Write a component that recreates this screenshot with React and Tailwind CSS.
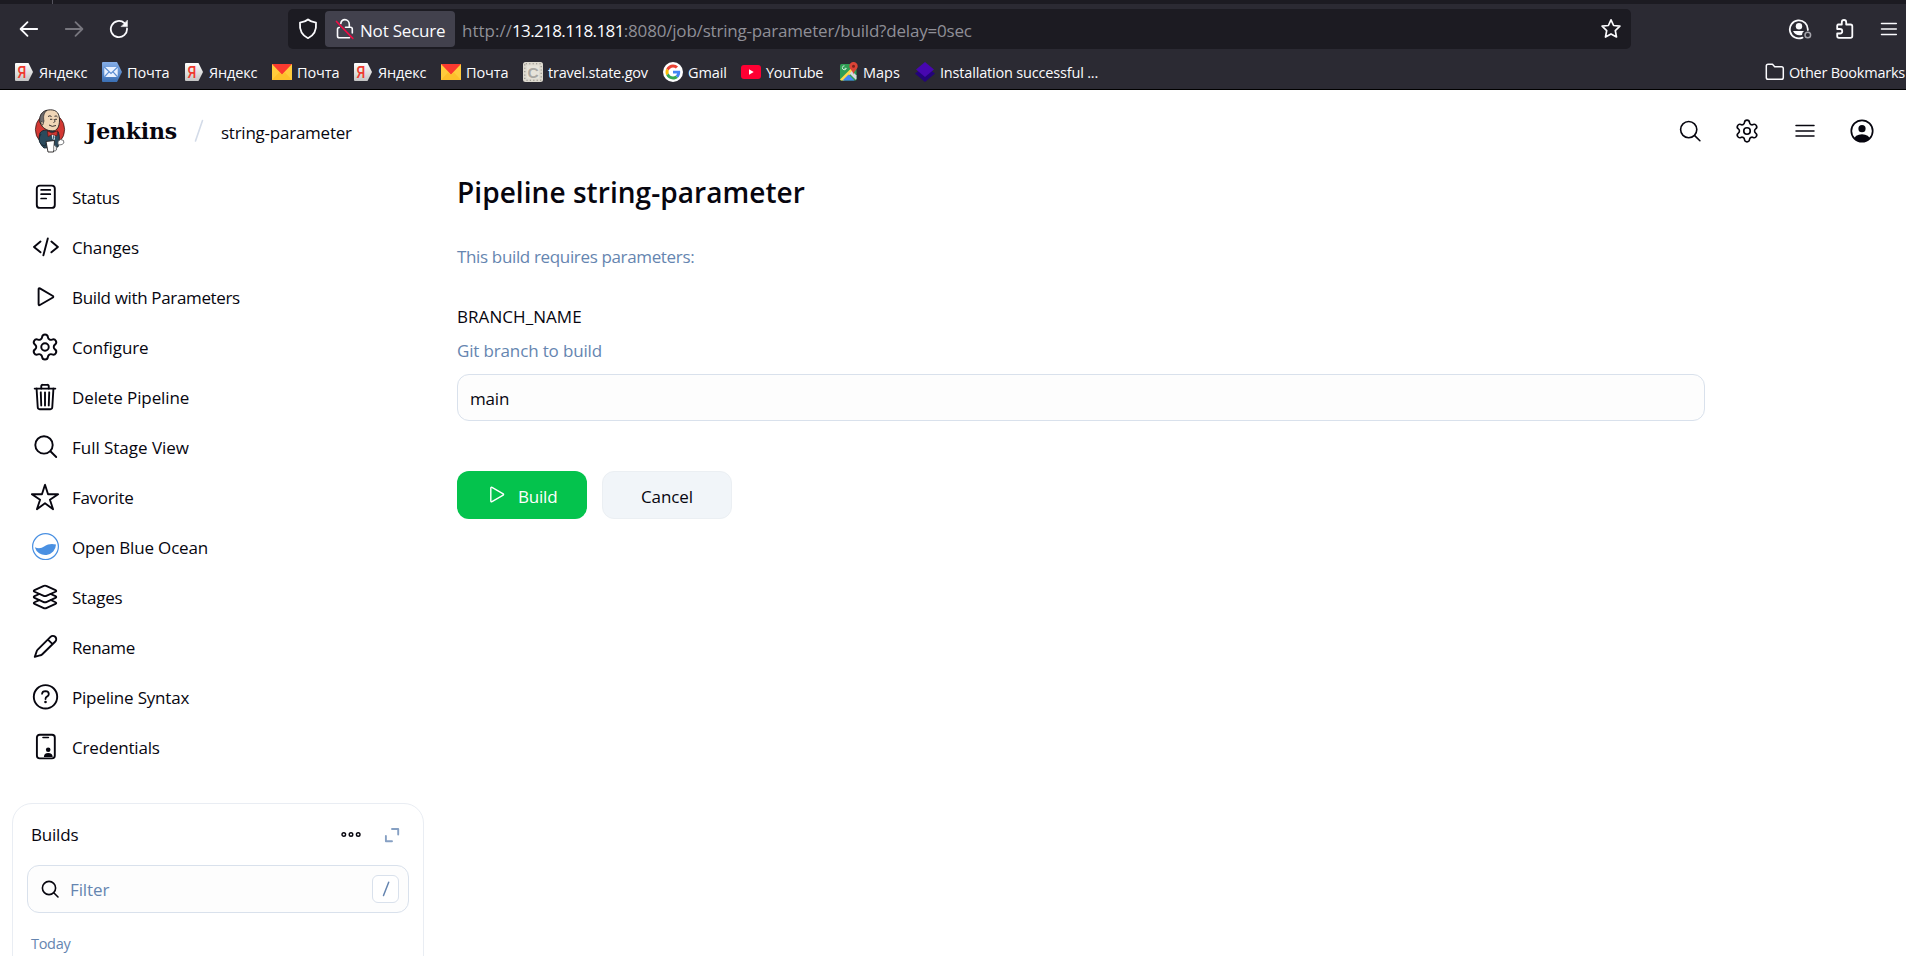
import React from "react";
import { IoTrashOutline, IoLayersOutline, IoStarOutline } from "react-icons/io5";
import { Settings } from "lucide-react";

/* ---------- browser icons ---------- */

function Line({ w, h, sw = 1.8, className = "", children }) {
  return (
    <svg
      width={w}
      height={h}
      viewBox={`0 0 ${w} ${h}`}
      fill="none"
      stroke="currentColor"
      strokeWidth={sw}
      strokeLinecap="round"
      strokeLinejoin="round"
      className={`block shrink-0 ${className}`}
    >
      {children}
    </svg>
  );
}

function Yandex() {
  return (
    <svg width="18" height="18" viewBox="0 0 18 18" className="block">
      <defs>
        <linearGradient id="ya" x1="0" y1="0" x2="0" y2="1">
          <stop offset="0" stopColor="#ffffff" />
          <stop offset="1" stopColor="#c4c4c4" />
        </linearGradient>
      </defs>
      <path d="M0 1Q0 0 1 0H13.500L18 9L13.500 18H1Q0 18 0 17Z" fill="url(#ya)" />
      <text x="2.600" y="15" fontFamily="Liberation Sans" fontWeight="bold" fontSize="16" textLength="8.500" lengthAdjust="spacingAndGlyphs" fill="#ee3a30">Я</text>
    </svg>
  );
}

function BlueMail() {
  return (
    <svg width="20" height="20" viewBox="0 0 20 20" className="block">
      <defs>
        <linearGradient id="bm" x1="0" y1="0" x2="0" y2="1">
          <stop offset="0" stopColor="#86aee8" />
          <stop offset="1" stopColor="#3a6fb4" />
        </linearGradient>
      </defs>
      <path d="M0 1Q0 0 1 0H15L20 10L15 20H1Q0 20 0 19Z" fill="url(#bm)" />
      <rect x="2.300" y="5" width="13.400" height="10" fill="#e9f1ff" />
      <path d="M2.300 5L9 11.500L15.700 5M2.300 15L7 9.800M15.700 15L11 9.800" stroke="#5d8fd3" strokeWidth="1.200" fill="none" />
    </svg>
  );
}

function Envelope() {
  return (
    <svg width="20" height="16" viewBox="0 0 20 16" className="block">
      <rect width="20" height="16" fill="#ffcc3c" />
      <path d="M0 16L7 8.500L10 11L13 8.500L20 16Z" fill="#fdc02b" />
      <path d="M0 0H20L10 10.500Z" fill="#fb3a2f" />
    </svg>
  );
}

function StateGov() {
  return (
    <svg width="20" height="20" viewBox="0 0 20 20" className="block">
      <rect width="20" height="20" rx="2.500" fill="#dedad0" />
      <rect x="1.800" y="1.800" width="16.400" height="16.400" rx="1" fill="none" stroke="#8f8c84" strokeWidth="1.100" strokeDasharray="1.200 2.200" />
      <rect x="4" y="3.500" width="12" height="13" fill="#e6e3da" />
      <text x="4.600" y="15.500" fontFamily="Liberation Sans" fontWeight="bold" fontSize="15.500" fill="#a9a7a2">C</text>
    </svg>
  );
}

function Google() {
  return (
    <svg width="20" height="20" viewBox="0 0 20 20" className="block">
      <circle cx="10" cy="10" r="10" fill="#fff" />
      <g transform="translate(2.500 2.500) scale(.3125)">
        <path fill="#EA4335" d="M24 9.500c3.540 0 6.710 1.220 9.210 3.600l6.850-6.850C35.900 2.380 30.470 0 24 0 14.620 0 6.510 5.380 2.560 13.220l7.980 6.190C12.430 13.720 17.740 9.500 24 9.500z" />
        <path fill="#4285F4" d="M46.980 24.550c0-1.570-.15-3.090-.38-4.550H24v9.020h12.940c-.58 2.960-2.260 5.480-4.780 7.180l7.730 6c4.510-4.180 7.090-10.360 7.090-17.650z" />
        <path fill="#FBBC05" d="M10.530 28.590c-.48-1.450-.76-2.990-.76-4.590s.27-3.140.76-4.590l-7.980-6.190C.92 16.460 0 20.120 0 24c0 3.880.92 7.540 2.560 10.780l7.970-6.190z" />
        <path fill="#34A853" d="M24 48c6.480 0 11.930-2.130 15.890-5.810l-7.730-6c-2.150 1.450-4.920 2.300-8.160 2.300-6.260 0-11.570-4.220-13.470-9.910l-7.980 6.190C6.510 42.620 14.620 48 24 48z" />
      </g>
    </svg>
  );
}

function YouTube() {
  return (
    <svg width="20" height="14" viewBox="0 0 20 14" className="block">
      <rect width="20" height="14" rx="3" fill="#ff0033" />
      <path d="M8 4.300L12.700 7L8 9.700Z" fill="#fff" />
    </svg>
  );
}

function Maps() {
  return (
    <svg width="20" height="20" viewBox="0 0 20 20" className="block">
      <rect x="1" y="2" width="16.500" height="16.500" rx="1.500" fill="#2f9e54" />
      <path d="M1 17.500L12 6.500L14.500 9L5 18.500H2Z" fill="#ffd84a" />
      <path d="M3.500 18.500L9.500 12.500L15.500 18.500Z" fill="#4285f4" />
      <path d="M10.500 11.500L13 9L17.500 13.500V17L16.800 17.800Z" fill="#d8dade" />
      <path d="M5.500 3.800a2 2 0 1 0 1.800 2.500H5.600" fill="none" stroke="#cfead8" strokeWidth="1" />
      <path d="M14.500 0a4.200 4.200 0 0 0-4.200 4.200c0 3 3.400 4 4.200 8.300c.8-4.300 4.200-5.300 4.200-8.300A4.200 4.200 0 0 0 14.500 0Z" fill="#db4437" />
      <circle cx="14.500" cy="4.200" r="1.500" fill="#7b231c" />
    </svg>
  );
}

function Diamond() {
  return (
    <svg width="20" height="20" viewBox="0 0 20 20" className="block">
      <path d="M0 11.500L10 4L20 11.500L10 20Z" fill="#23037a" />
      <path d="M1 7.500L10 0L19 7.500L10 15Z" fill="#4707b0" />
    </svg>
  );
}

const bookmarks = [
  { icon: <Yandex />, text: "Яндекс", box: "w-[87px] gap-[4px] tracking-[-0.150px]" },
  { icon: <BlueMail />, text: "Почта", box: "w-[83px] gap-[5px] tracking-[-0.100px]" },
  { icon: <Yandex />, text: "Яндекс", box: "w-[87px] gap-[4px] tracking-[-0.150px]" },
  { icon: <Envelope />, text: "Почта", box: "w-[82px] gap-[5px] tracking-[-0.100px]" },
  { icon: <Yandex />, text: "Яндекс", box: "w-[87px] gap-[4px] tracking-[-0.150px]" },
  { icon: <Envelope />, text: "Почта", box: "w-[82px] gap-[5px] tracking-[-0.100px]" },
  { icon: <StateGov />, text: "travel.state.gov", box: "w-[140px] gap-[5px] tracking-[-0.200px]" },
  { icon: <Google />, text: "Gmail", box: "w-[78px] gap-[5px] tracking-[-0.100px]" },
  { icon: <YouTube />, text: "YouTube", box: "w-[98px] gap-[5px] tracking-[-0.350px]" },
  { icon: <Maps />, text: "Maps", box: "w-[76px] gap-[4px]" },
  { icon: <Diamond />, text: "Installation successful ...", box: "w-[200px] gap-[5px] tracking-[-0.180px]" },
];

function Browser() {
  return (
    <div className="h-[90px] border-b border-black bg-[#2b2a33] text-[#fbfbfe]">
      <div className="h-1 bg-[#1c1b22] pl-[52px]">
        <div className="h-1 w-px bg-[#55545e]" />
      </div>
      <div className="flex h-[50px] items-center">
        <Line w={20} h={18} className="ml-[19px]">
          <path d="M18.200 9H2M8.500 2.200L1.600 9L8.500 15.800" />
        </Line>
        <Line w={20} h={18} className="ml-[25px] text-[#77767e]">
          <path d="M1.800 9H18M11.500 2.200L18.400 9L11.500 15.800" />
        </Line>
        <Line w={20} h={20} className="ml-[25px]">
          <path d="M18 9.500A8.100 8.100 0 1 1 15.500 4.200" />
          <path d="M18.400 1.500V7.600H12.400Z" fill="currentColor" strokeWidth="0.600" />
        </Line>
        <div className="ml-[159px] flex h-10 w-[1343px] items-center rounded-[5px] bg-[#1c1b22]">
          <Line w={20} h={22} className="ml-[10px]">
            <path d="M10 1.500C12 3.300 15 4.200 18 4.700C18.600 11.500 16 17.500 10 20.200C4 17.500 1.400 11.500 2 4.700C5 4.200 8 3.300 10 1.500Z" />
          </Line>
          <div className="ml-[7px] flex h-9 w-[130px] items-center rounded-[4px] bg-[#42414d]">
            <Line w={20} h={22} className="ml-[10px]" sw={1.6}>
              <path d="M5.800 5.500C6.200 3 7.600 1.600 9.900 1.600S14.300 3.600 14.300 6.500V9.300" />
              <path d="M10.500 9.300H15.500A1.800 1.800 0 0 1 17.300 11.100V15M14.500 19.800H4.300A1.800 1.800 0 0 1 2.500 18V11.300A1.800 1.800 0 0 1 4.300 9.500" />
              <path d="M1.500 3.500L17.800 20.300" stroke="#f10c45" strokeWidth="1.700" />
            </Line>
            <span className="ml-[5px] pt-[2px] text-[17px] leading-none tracking-[-0.200px] whitespace-nowrap">Not Secure</span>
          </div>
          <div className="ml-[7px] flex pt-[2px] text-[17px] leading-none whitespace-nowrap text-[#8f8f97]">
            <span>http://</span>
            <span className="tracking-[-0.600px] text-[#fbfbfe]">13.218.118.181</span>
            <span className="tracking-[-0.190px]">:8080/job/string-parameter/build?delay=0sec</span>
          </div>
          <Line w={22} h={22} sw={1.7} className="mr-[9px] ml-auto">
            <path d="M11 1.800L13.600 7.500L19.900 8.200L15.300 12.600L16.500 19L11 15.900L5.500 19L6.700 12.600L2.100 8.200L8.400 7.500Z" />
          </Line>
        </div>
        <Line w={24} h={22} className="ml-[157px]">
          <path d="M14.500 19.600A9 9 0 1 1 19.800 12" />
          <circle cx="11" cy="8.200" r="3.200" fill="currentColor" stroke="none" />
          <path d="M5 13H16A5 5 0 0 0 14 17A8 8 0 0 1 5 13Z" fill="currentColor" stroke="none" />
          <circle cx="19.800" cy="17" r="2.800" stroke="#a5a4ab" strokeWidth="1.500" />
        </Line>
        <Line w={20} h={22} className="ml-[23px]">
          <path d="M3 6.500H6.800V4.200A2.200 2.200 0 0 1 11.200 4.200V6.500H15.500A1.800 1.800 0 0 1 17.300 8.300V18A1.800 1.800 0 0 1 15.500 19.800H4A1.800 1.800 0 0 1 2.200 18V15.500H5A2.200 2.200 0 0 0 5 11H2.200V8Q2.200 6.500 3.500 6.500" />
        </Line>
        <Line w={18} h={16} sw={1.5} className="ml-[25px]">
          <path d="M1.500 2.500H16.300M1.500 8H16.300M1.500 13.500H16.300" />
        </Line>
      </div>
      <div className="flex h-[35px] items-center pl-[15px] text-[14.500px] leading-none">
        {bookmarks.map((b, i) => (
          <div key={i} className={`flex shrink-0 items-center whitespace-nowrap ${b.box}`}>
            <span className="w-5 shrink-0">{b.icon}</span>
            <span className="pt-[3px]">{b.text}</span>
          </div>
        ))}
        <div className="mr-[1px] ml-auto flex items-center gap-1 whitespace-nowrap">
          <Line w={20} h={18} sw={1.5}>
            <path d="M1.300 14.500V3A1.800 1.800 0 0 1 3.100 1.200H7.500L9.700 3.700H16.500A1.800 1.800 0 0 1 18.300 5.500V14.500A1.800 1.800 0 0 1 16.500 16.300H3.100A1.800 1.800 0 0 1 1.300 14.500Z" />
          </Line>
          <span className="pt-[3px] tracking-[-0.230px]">Other Bookmarks</span>
        </div>
      </div>
    </div>
  );
}

/* ---------- Jenkins header ---------- */

function Butler() {
  return (
    <svg width="32" height="44" viewBox="0 0 32 44" className="block shrink-0">
      <ellipse cx="16" cy="20.500" rx="14.600" ry="16" fill="#d33833" stroke="#3b1a18" strokeWidth="0.800" />
      <path d="M6 13C4.500 5 10 .8 16.500 .8S25.500 5 25.500 11C25.500 17 23.500 22 18.500 22S7.500 19 6 13Z" fill="#f0d6b7" stroke="#231f20" strokeWidth="0.900" />
      <path d="M6 13.500C4.800 6.500 8.500 2 13 1.300C9.800 4 9 7.500 10 12L8.800 16Z" fill="#6d6b6d" stroke="#231f20" strokeWidth="0.600" />
      <path d="M8.200 12.500C6.500 12 6.300 15.500 9 16" fill="#f0d6b7" stroke="#231f20" strokeWidth="0.700" />
      <path d="M14 7.500Q16 6 17.500 7.500M20.500 7.300Q22.500 6.200 23.500 8M16 10.300H18.300M21 10.300H23M20 10Q22 13 19.500 13.500M15 16Q18 18.500 22 16.500" stroke="#231f20" strokeWidth="0.900" fill="none" />
      <path d="M6 24C8 21 12 20.500 14.500 22L24 22.500C26 27 25.500 32 24 38L10 39C5 35 4.500 28 6 24Z" fill="#2b4a5c" stroke="#16252e" strokeWidth="0.900" />
      <path d="M17.500 25L21.500 25L20.500 31L18.500 30Z" fill="#fff" />
      <path d="M18.800 25.500L20.800 28L19 31Z" fill="#42647a" />
      <path d="M13.500 22L18 24L23.500 21.800L23 27L18.500 25.500L14 27.500Z" fill="#d33833" stroke="#5b1512" strokeWidth="0.700" />
      <path d="M7 25C3.500 30 5 36 11 37L13 33" fill="#2b4a5c" stroke="#16252e" strokeWidth="0.800" />
      <path d="M12 32.500L20.500 31.500L19.500 43H14Z" fill="#fff" stroke="#231f20" strokeWidth="0.900" />
      <path d="M24 32.500Q26.500 29 29.500 31.500Q31 34.500 28 35.500Q24.500 37 24 34.500Z" fill="#fff" stroke="#55585a" strokeWidth="0.800" />
      <path d="M20 36Q24 38 22.500 41Q21 43 19.500 41.500" fill="#e4e4e4" stroke="#55585a" strokeWidth="0.800" />
    </svg>
  );
}

function Header() {
  return (
    <header className="flex h-[82px] items-center pl-[34px]">
      <Butler />
      <span className="ml-[20px] font-['DejaVu_Serif','Liberation_Serif',serif] text-[22px] leading-none font-bold tracking-[-0.200px]">
        Jenkins
      </span>
      <Line w={10} h={24} sw={1.6} className="ml-[17px] text-[#d3dbe8]">
        <path d="M8.500 1.500L1.500 22" />
      </Line>
      <span className="ml-[17px] pt-[2px] text-[17px] leading-none tracking-[-0.240px]">string-parameter</span>
      <Line w={24} h={24} sw={1.6} className="ml-auto">
        <circle cx="10.700" cy="10.600" r="8.100" />
        <path d="M16.700 16.600L21.900 21.700" />
      </Line>
      <Settings size={26} strokeWidth={1.5} className="ml-[32px] shrink-0" />
      <Line w={22} h={20} sw={1.5} className="ml-[34px]">
        <path d="M2 4.600H20M2 9.900H20M2 15H20" />
      </Line>
      <svg width="24" height="24" viewBox="0 0 24 24" className="mr-[32px] ml-[34px] block shrink-0">
        <defs>
          <clipPath id="usr"><circle cx="12" cy="12" r="10.800" /></clipPath>
        </defs>
        <circle cx="12" cy="12" r="10.700" fill="none" stroke="currentColor" strokeWidth="1.700" />
        <circle cx="12" cy="9.700" r="3.600" fill="currentColor" />
        <ellipse cx="12" cy="20.500" rx="8" ry="5.200" fill="currentColor" clipPath="url(#usr)" />
      </svg>
    </header>
  );
}

/* ---------- side panel ---------- */

const Glyph = ({ children }) => <Line w={30} h={30} sw={1.9}>{children}</Line>;

const tasks = [
  {
    label: "Status", track: "tracking-[-0.300px]",
    icon: <Glyph><rect x="6.800" y="3.600" width="18" height="22.300" rx="3" /><path d="M11.100 7.900H20.300M11.100 12.200H20.300M11.100 16.500H16.200" strokeWidth="1.700" /></Glyph>,
  },
  {
    label: "Changes", track: "tracking-[-0.150px]",
    icon: <Glyph><path d="M10.500 9.500L4 14.900L10.500 20.300M21.400 9.500L27.900 14.900L21.400 20.300M17.800 6.500L13.400 23.300" /></Glyph>,
  },
  {
    label: "Build with Parameters", track: "tracking-[-0.350px]",
    icon: <Glyph><path d="M8.600 7.100V22.300Q8.700 23.600 9.900 23L22.900 15.500Q23.700 14.700 22.900 14L9.900 6.400Q8.700 5.900 8.600 7.100Z" /></Glyph>,
  },
  {
    label: "Configure", track: "tracking-[-0.120px]",
    icon: <Settings size={30} strokeWidth={1.55} className="block shrink-0" />,
  },
  { label: "Delete Pipeline", track: "tracking-[-0.100px]", icon: <IoTrashOutline size={30} className="block shrink-0" /> },
  {
    label: "Full Stage View", track: "tracking-[-0.030px]",
    icon: <Glyph><circle cx="14" cy="12.900" r="8.700" /><path d="M20.400 19.300L26.200 25" /></Glyph>,
  },
  { label: "Favorite", track: "tracking-[-0.300px]", icon: <IoStarOutline size={30} className="block shrink-0" /> },
  {
    label: "Open Blue Ocean", track: "tracking-[-0.160px]",
    icon: (
      <svg width="30" height="30" viewBox="0 0 30 30" className="block shrink-0">
        <circle cx="15.500" cy="14.600" r="12.900" fill="#fff" stroke="#4a90e2" strokeWidth="1.200" />
        <path d="M4.800 15.200C8.500 16.800 11.500 16.300 14.500 14.200C18 12 22 11.300 26 12.600A10.800 10.800 0 0 1 4.800 15.200Z" fill="#4a90e2" />
      </svg>
    ),
  },
  { label: "Stages", track: "tracking-[-0.200px]", icon: <IoLayersOutline size={30} className="block shrink-0" /> },
  {
    label: "Rename", track: "tracking-[-0.400px]",
    icon: <Glyph><path d="M4.800 24.900L6.700 19.300Q7 18.400 7.700 17.700L20.500 4.900A3.200 3.200 0 0 1 25.300 9.500L12.300 22.300Q11.600 23 10.700 23.200ZM17.900 7.600L22.600 12.100" /></Glyph>,
  },
  {
    label: "Pipeline Syntax", track: "tracking-[-0.200px]",
    icon: (
      <Glyph>
        <circle cx="15.500" cy="14.800" r="11.700" />
        <path d="M12.100 11.800Q12.300 9.200 15.500 9.200Q18.800 9.300 18.800 12Q18.800 13.600 17 14.600Q15.500 15.500 15.500 17" strokeWidth="1.800" />
        <circle cx="15.500" cy="20" r="1.300" fill="currentColor" stroke="none" />
      </Glyph>
    ),
  },
  {
    label: "Credentials", track: "tracking-[-0.180px]",
    icon: (
      <Glyph>
        <rect x="6.900" y="2.700" width="17.900" height="23.700" rx="2.800" />
        <path d="M13 5.500H18.400" strokeWidth="1.600" />
        <circle cx="18.200" cy="17.700" r="2.300" fill="currentColor" stroke="none" />
        <path d="M13.900 25Q13.900 21 18.200 21T22.700 25Z" fill="currentColor" stroke="none" />
      </Glyph>
    ),
  },
];

function Sidebar() {
  return (
    <aside className="w-[424px] shrink-0 pl-3">
      <nav>
        {tasks.map((t) => (
          <div key={t.label} className="flex h-[50px] items-center gap-[12px] pl-[18px]">
            {t.icon}
            <span className={`text-[17px] leading-none whitespace-nowrap ${t.track}`}>{t.label}</span>
          </div>
        ))}
      </nav>
      <section className="mt-[31px] h-[200px] rounded-[20px] border border-[#e9edf3] px-[14px]">
        <div className="flex h-[61px] items-center pl-[4px]">
          <span className="text-[17px] leading-none tracking-[-0.200px]">Builds</span>
          <Line w={20} h={8} sw={1.4} className="ml-auto">
            <circle cx="2.800" cy="3.500" r="1.800" />
            <circle cx="10" cy="3.500" r="1.800" />
            <circle cx="17.200" cy="3.500" r="1.800" />
          </Line>
          <Line w={16} h={16} sw={1.9} className="mr-[9px] ml-[23px] text-[#86a0c3]">
            <path d="M8 2H14.200V7.500M1.900 9V14.200H8" />
          </Line>
        </div>
        <div className="flex h-12 items-center rounded-[12px] border border-[#d9e1ec] bg-[#fdfdfd] pr-[9px] pl-[13px]">
          <Line w={19} h={19} sw={1.6}>
            <circle cx="8" cy="8" r="6.600" />
            <path d="M13 13L17 17" />
          </Line>
          <span className="ml-[10px] text-[17px] leading-none tracking-[-0.100px] text-[#6585b0]">Filter</span>
          <div className="ml-auto flex h-7 w-[27px] items-center justify-center rounded-[6px] border border-[#d9e1ec] bg-white text-[#6585b0]">
            <Line w={8} h={16} sw={1.5}>
              <path d="M6.700 1.300L1.500 14.500" />
            </Line>
          </div>
        </div>
        <div className="mt-[24px] pl-[4px] text-[14.500px] leading-none tracking-[-0.300px] text-[#6585b0]">Today</div>
      </section>
    </aside>
  );
}

/* ---------- page ---------- */

export default function App() {
  return (
    <div className="h-[956px] w-[1906px] overflow-hidden bg-white font-['Open_Sans','Noto_Sans',sans-serif] text-[#07060f]">
      <Browser />
      <Header />
      <div className="flex">
        <Sidebar />
        <main className="ml-[33px] w-[1248px]">
          <h1 className="pt-[6px] text-[28px] leading-[28px] font-semibold tracking-[0.060px]">Pipeline string-parameter</h1>
          <p className="mt-[40px] text-[17px] leading-[22px] tracking-[-0.350px] text-[#6585b0]">This build requires parameters:</p>
          <div className="mt-[38px] text-[17px] leading-[22px] tracking-[0.060px]">BRANCH_NAME</div>
          <div className="mt-[12px] text-[17px] leading-[22px] tracking-[-0.150px] text-[#6585b0]">Git branch to build</div>
          <div className="mt-[12px] flex h-[47px] items-center rounded-[12px] border border-[#d9e1ec] bg-[#fdfdfd] px-[12px] pt-[1px] text-[17px] leading-none tracking-[-0.200px]">
            main
          </div>
          <div className="mt-[50px] flex gap-[15px]">
            <button className="flex h-12 w-[130px] items-center rounded-[12px] bg-[#04c34d] pl-[32px] text-[17px] leading-none text-white">
              <Line w={18} h={20} sw={1.4}>
                <path d="M1.800 3V16Q1.900 17.200 3 16.600L14.200 10.200Q15 9.500 14.200 8.900L3 2.400Q1.900 1.900 1.800 3Z" />
              </Line>
              <span className="ml-[11px] pt-[2px] tracking-[-0.200px]">Build</span>
            </button>
            <button className="flex h-12 w-[130px] items-center justify-center rounded-[12px] border border-[#ebeff3] bg-[#f1f5f9] pt-[2px] text-[17px] leading-none tracking-[-0.100px]">
              Cancel
            </button>
          </div>
        </main>
      </div>
    </div>
  );
}
